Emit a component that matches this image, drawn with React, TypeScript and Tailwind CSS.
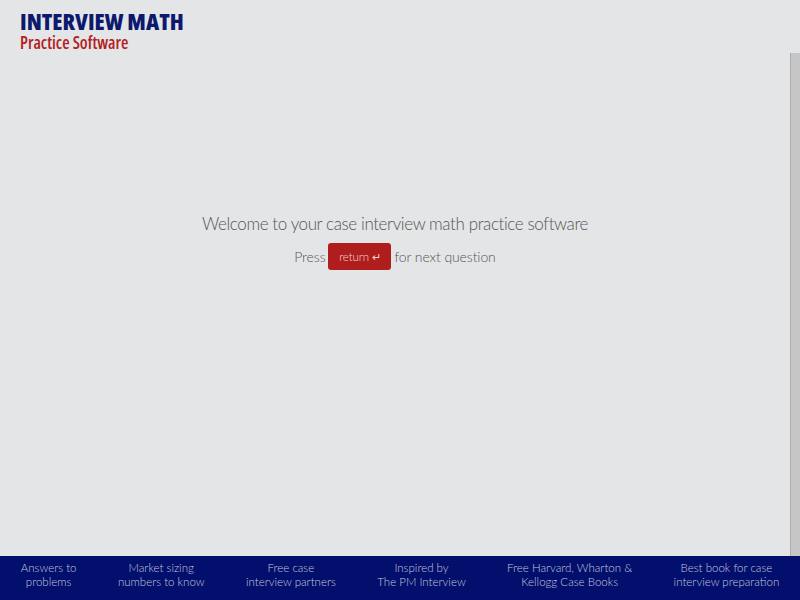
const FOOTER_LINKS = [
  ['Answers to', 'problems'],
  ['Market sizing', 'numbers to know'],
  ['Free case', 'interview partners'],
  ['Inspired by', 'The PM Interview'],
  ['Free Harvard, Wharton &', 'Kellogg Case Books'],
  ['Best book for case', 'interview preparation'],
];

export default function App() {
  return (
    <div className="flex h-[600px] w-[800px] flex-col bg-[#e4e5e7] font-['Lato','Open_Sans',sans-serif]">
      <header className="h-[53px] px-5 pt-[9px] font-['Open_Sans','DejaVu_Sans_Condensed',sans-serif]">
        <h1 className="text-[23px] font-extrabold leading-[25px] text-[#0c1a6e] [font-stretch:75%]">INTERVIEW MATH</h1>
        <p className="text-[17px] font-semibold leading-[17px] text-[#b3201f] [font-stretch:84%]">Practice Software</p>
      </header>

      <div className="flex flex-1">
        <main className="flex flex-1 flex-col items-center pt-[159px] text-[#555]">
          <h2 className="text-[17px] font-light leading-6 tracking-[-0.4px]">Welcome to your case interview math practice software</h2>
          <div className="mt-[7px] flex items-center gap-[3px] text-[14px] font-light tracking-[-0.1px]">
            <span>Press</span>
            <span className="flex h-[27px] w-[63px] items-center justify-center rounded-[3px] bg-[#b01d1d] pt-[1px] text-[11.5px] text-[#efd6d6]">
              return <span className="ml-[3px] text-[11px]">↵</span>
            </span>
            <span>for next question</span>
          </div>
        </main>
        <div className="w-[10px] border-l border-[#acacac] bg-[#c6c6c6]" />
      </div>

      <footer className="flex h-[44px] justify-around bg-[#020f6c] pt-[5px] text-center text-[11.5px] font-light leading-[14px] text-[#c3c7df]">
        {FOOTER_LINKS.map(([a, b]) => (
          <a key={a} className="block">
            {a}
            <br />
            {b}
          </a>
        ))}
      </footer>
    </div>
  );
}
